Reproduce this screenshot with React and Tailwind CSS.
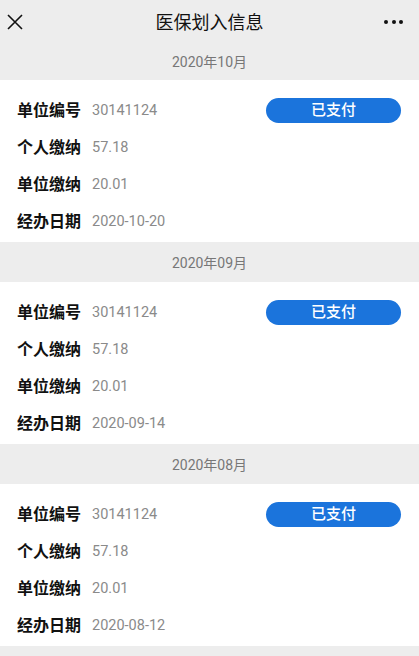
import React from 'react';

const records = [
  { month: '2020年10月', unit: '30141124', personal: '57.18', company: '20.01', date: '2020-10-20' },
  { month: '2020年09月', unit: '30141124', personal: '57.18', company: '20.01', date: '2020-09-14' },
  { month: '2020年08月', unit: '30141124', personal: '57.18', company: '20.01', date: '2020-08-12' },
];

const font = { fontFamily: 'Roboto, "Noto Sans CJK SC", sans-serif' };

const Row = ({ label, value, children }) => (
  <div className="flex h-[37px] items-center">
    <span className="text-[16px] font-bold text-[#111]">{label}</span>
    <span className="ml-[11px] text-[14.5px] text-[#8a8a8a]">{value}</span>
    {children}
  </div>
);

const Record = ({ item, first }) => (
  <div>
    <div
      className={`flex items-center justify-center bg-[#ededed] text-[14px] text-[#777] ${
        first ? 'h-[32px] pb-[3px]' : 'h-[40px] pt-[2px]'
      }`}
    >
      {item.month}
    </div>
    <div className="bg-white pl-[17px] pr-[18px] pt-[12px] pb-[2px]">
      <Row label="单位编号" value={item.unit}>
        <button className="ml-auto flex h-[25px] w-[135px] items-center justify-center rounded-full bg-[#1b74dc] text-[15px] font-medium text-white">
          已支付
        </button>
      </Row>
      <Row label="个人缴纳" value={item.personal} />
      <Row label="单位缴纳" value={item.company} />
      <Row label="经办日期" value={item.date} />
    </div>
  </div>
);

export default function App() {
  return (
    <div className="h-[656px] w-[419px] overflow-hidden bg-[#ededed]" style={font}>
      <div className="grid h-[48px] grid-cols-[1fr_auto_1fr] items-center bg-[#ededed] px-[7px]">
        <svg width="16" height="16" viewBox="0 0 16 16" className="mb-[4px]">
          <path d="M1 1 L15 15 M15 1 L1 15" stroke="#111" strokeWidth="1.6" fill="none" />
        </svg>
        <h1 className="mb-[4px] text-[18px] text-[#111]">医保划入信息</h1>
        <div className="mb-[4px] mr-[9px] flex justify-end gap-[3.5px]">
          <span className="h-[4px] w-[4px] rounded-full bg-[#111]" />
          <span className="h-[4px] w-[4px] rounded-full bg-[#111]" />
          <span className="h-[4px] w-[4px] rounded-full bg-[#111]" />
        </div>
      </div>
      {records.map((item, i) => (
        <Record key={i} item={item} first={i === 0} />
      ))}
    </div>
  );
}
